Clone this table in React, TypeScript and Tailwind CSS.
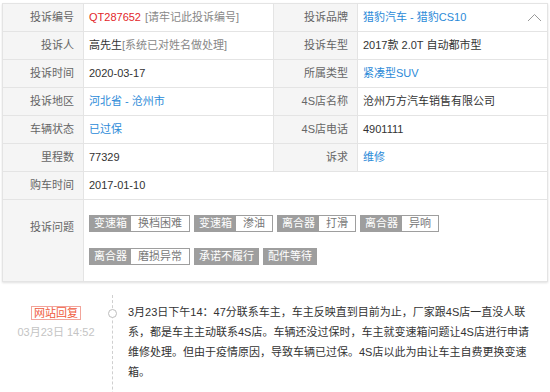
import React from "react"

const rows = [
  { l1: "投诉编号", v1: "code", l2: "投诉品牌", v2: "brand" },
  { l1: "投诉人", v1: "person", l2: "投诉车型", v2: "2017款 2.0T 自动都市型" },
  { l1: "投诉时间", v1: "2020-03-17", l2: "所属类型", v2: "type" },
  { l1: "投诉地区", v1: "area", l2: "4S店名称", v2: "沧州万方汽车销售有限公司" },
  { l1: "车辆状态", v1: "status", l2: "4S店电话", v2: "4901111" },
  { l1: "里程数", v1: "77329", l2: "诉求", v2: "repair" },
]

const tagRows = [
  [
    { k: "变速箱", v: "换档困难" },
    { k: "变速箱", v: "渗油" },
    { k: "离合器", v: "打滑" },
    { k: "离合器", v: "异响" },
  ],
  [{ k: "离合器", v: "磨损异常" }, { k: "承诺不履行" }, { k: "配件等待" }],
]

function Value({ v }: { v: string }) {
  if (v === "code")
    return (
      <>
        <span className="text-[#e3262b]">QT287652</span>
        <span className="text-[#888] ml-[4px]">[请牢记此投诉编号]</span>
      </>
    )
  if (v === "person")
    return (
      <>
        <span>高先生</span>
        <span className="text-[#888]">[系统已对姓名做处理]</span>
      </>
    )
  if (v === "area") return <span className="text-[#2b8ad8]">河北省 - 沧州市</span>
  if (v === "status") return <span className="text-[#2b8ad8]">已过保</span>
  if (v === "type") return <span className="text-[#2b8ad8]">紧凑型SUV</span>
  if (v === "repair") return <span className="text-[#2b8ad8]">维修</span>
  if (v === "brand")
    return (
      <div className="flex items-center justify-between pr-[5px]">
        <span className="text-[#2b8ad8]">猎豹汽车 - 猎豹CS10</span>
        <svg width="15" height="9" viewBox="0 0 15 9" fill="none">
          <polyline points="1,8 7.5,1.5 14,8" stroke="#999" strokeWidth="1" />
        </svg>
      </div>
    )
  return <span>{v}</span>
}

export default function App() {
  return (
    <div className="w-[550px] h-[392px] overflow-hidden bg-white font-['Liberation_Sans','Noto_Sans_CJK_SC',sans-serif] text-[11px] text-[#333]">
      <div className="ml-[2px] mr-[2px] mt-[3px] border border-[#e4e4e4] shadow-[0_1px_2px_rgba(0,0,0,0.12)]">
        {rows.map((r) => (
          <div key={r.l1} className="flex h-[28px] border-b border-[#e4e4e4]">
            <div className="w-[81px] flex items-center justify-end pr-[9px] bg-[#f5f5f5] border-r border-[#e4e4e4] text-[#666]">
              {r.l1}
            </div>
            <div className="w-[190px] flex items-center pl-[5px] border-r border-[#e4e4e4]">
              <Value v={r.v1} />
            </div>
            <div className="w-[84px] flex items-center justify-end pr-[9px] bg-[#f5f5f5] border-r border-[#e4e4e4] text-[#666]">
              {r.l2}
            </div>
            <div className="flex-1 flex items-center pl-[5px]">
              <div className="w-full">
                <Value v={r.v2} />
              </div>
            </div>
          </div>
        ))}
        <div className="flex h-[28px] border-b border-[#e4e4e4]">
          <div className="w-[81px] flex items-center justify-end pr-[9px] bg-[#f5f5f5] border-r border-[#e4e4e4] text-[#666]">
            购车时间
          </div>
          <div className="flex-1 flex items-center pl-[5px]">2017-01-10</div>
        </div>
        <div className="flex h-[81px]">
          <div className="w-[81px] pt-[20px] text-right pr-[9px] bg-[#f5f5f5] border-r border-[#e4e4e4] text-[#666] leading-[14px]">
            投诉问题
          </div>
          <div className="flex-1 pl-[5px] pt-[15px] flex flex-col gap-[16px]">
            {tagRows.map((tr, i) => (
              <div key={i} className="flex gap-[4px]">
                {tr.map((t, j) => (
                  <div key={j} className="flex border border-[#9e9e9e] h-[17px] leading-[15px]">
                    <span className="bg-[#9e9e9e] text-white px-[4px]">{t.k}</span>
                    {t.v && <span className="bg-white text-[#777] px-[7px]">{t.v}</span>}
                  </div>
                ))}
              </div>
            ))}
          </div>
        </div>
      </div>

      <div className="flex mt-[13px] h-[120px]">
        <div className="w-[112px] flex flex-col items-center pt-[11px]">
          <span className="border border-[#f2a49a] text-[#ef5a3c] px-[2px] leading-[12px]">网站回复</span>
          <span className="mt-[6px] text-[#c4c4c4] leading-[12px]">03月23日 14:52</span>
        </div>
        <div className="relative border-l border-dashed border-[#cfcfcf]">
          <div className="absolute left-[-5px] top-[14px] w-[9px] h-[9px] rounded-full border border-[#bdbdbd] bg-white" />
        </div>
        <p className="w-[402px] ml-[15px] pt-[7px] leading-[20px] text-[#333]">
          3月23日下午14：47分联系车主，车主反映直到目前为止，厂家跟4S店一直没人联系，都是车主主动联系4S店。车辆还没过保时，车主就变速箱问题让4S店进行申请维修处理。但由于疫情原因，导致车辆已过保。4S店以此为由让车主自费更换变速箱。
        </p>
      </div>
    </div>
  )
}
